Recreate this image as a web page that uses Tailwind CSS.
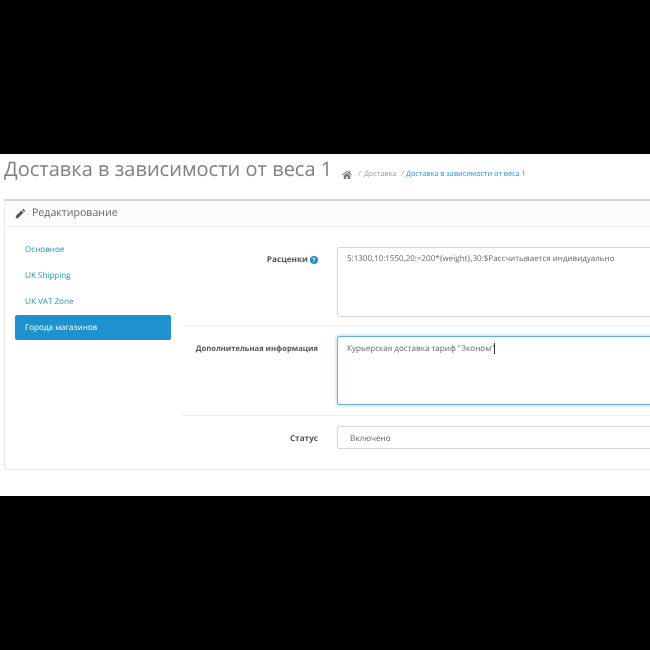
<!DOCTYPE html>
<html lang="ru">
<head>
  <meta charset="UTF-8">
  <title>Доставка в зависимости от веса 1</title>
  <script src="https://cdn.jsdelivr.net/npm/@tailwindcss/browser@4"></script>
</head>
<body class="bg-black font-['Open_Sans',sans-serif] overflow-hidden [text-rendering:geometricPrecision]">
  <div class="h-[650px] w-[650px] pt-[154px] overflow-hidden">
    <div class="bg-white h-[342px] pl-1 overflow-hidden blur-[0.35px]">
      <!-- Page header -->
      <div class="flex items-start h-[45px] w-[700px]">
        <h1 class="text-[20px] leading-[30px] text-[#808080] whitespace-nowrap">Доставка в зависимости от веса 1</h1>
        <div class="flex items-center ml-[10px] mt-[14px] text-[7.3px] leading-[12px] whitespace-nowrap">
          <svg class="w-[10px] h-[9px] text-[#777]" viewBox="0 0 24 22" fill="currentColor"><path d="M12 1 0 11.500l1.500 1.700L12 4l10.500 9.200 1.500-1.700-4-3.500V2h-3v3.400zM4 14v8h6v-6h4v6h6v-8l-8-7z"/></svg>
          <span class="text-[#999] ml-[6px]">/</span>
          <span class="text-[#999] ml-[3px]">Доставка</span>
          <span class="text-[#999] ml-[5px]">/</span>
          <span class="text-[#1e91cf] ml-[2px]">Доставка в зависимости от веса 1</span>
        </div>
      </div>

      <!-- Panel -->
      <div class="w-[700px] h-[271px] border border-[#e8e8e8] border-t-2 border-t-[#d4d4d4]">
        <div class="flex items-center h-[26px] bg-[#fcfcfc] border-b border-[#eeeeee] pl-[10px] text-[10.6px] text-[#666]">
          <svg class="w-[10px] h-[10px] text-[#555]" viewBox="0 0 24 24" fill="currentColor"><path d="M2 17 15.500 3.500l5 5L7 22H2zM17 2l1.500-1.500a1.700 1.700 0 0 1 2.400 0l2.600 2.600a1.700 1.700 0 0 1 0 2.400L22 7z"/></svg>
          <span class="ml-[7px]">Редактирование</span>
        </div>

        <div class="flex">
          <!-- Tabs -->
          <div class="w-[156px] mr-[10px] ml-[10px] shrink-0 pt-[10px] text-[8.1px] text-[#1e91cf]">
            <div class="h-[26px] pl-[10px] flex items-center">Основное</div>
            <div class="h-[26px] pl-[10px] flex items-center">UK Shipping</div>
            <div class="h-[26px] pl-[10px] flex items-center">UK VAT Zone</div>
            <div class="h-[25px] pl-[10px] pt-[1px] flex items-center bg-[#1e91cf] text-white rounded-[2px]">Города магазинов</div>
          </div>

          <!-- Form -->
          <div class="flex-1">
            <div class="flex h-[99px] pt-[20px] border-b border-[#f0f0f0]">
              <div class="w-[156px] pr-[19px] pt-[7px] flex justify-end items-start font-bold text-[#555] text-[8.2px] leading-[12px]">
                Расценки
                <span class="w-[8px] h-[8px] ml-[2px] mt-[2px] rounded-full bg-[#1e91cf] text-white text-[6px] leading-[8px] text-center">?</span>
              </div>
              <div class="w-[400px] h-[70px] border border-[#d5d5d5] rounded-[2px] px-[9px] pt-[5px] text-[#666] leading-[12px] text-[8px]">5:1300,10:1550,20:=200*{weight},30:$Рассчитывается индивидуально</div>
            </div>

            <div class="flex h-[90px] pt-[10px] border-b border-[#eeeeee]">
              <div class="w-[156px] pr-[19px] pt-[7px] text-right font-bold text-[#555] text-[7.6px] leading-[12px] whitespace-nowrap">Дополнительная информация</div>
              <div class="w-[400px] h-[69px] border border-[#66afe9] rounded-[2px] shadow-[0_0_4px_rgba(102,175,233,0.6)] px-[9px] pt-[6px] text-[#666] leading-[12px] text-[8.1px]">Курьерская доставка тариф "Эконом"<span class="inline-block w-px h-[11px] bg-[#333] align-middle"></span></div>
            </div>

            <div class="flex pt-[10px]">
              <div class="w-[156px] pr-[19px] pt-[7px] text-right font-bold text-[#555] text-[8.2px] leading-[12px]">Статус</div>
              <div class="w-[400px] h-[23px] pt-[3px] border border-[#d5d5d5] rounded-[2px] pl-[12px] flex items-center text-[#666] text-[8.2px]">Включено</div>
            </div>
          </div>
        </div>
      </div>
    </div>
  </div>
</body>
</html>
